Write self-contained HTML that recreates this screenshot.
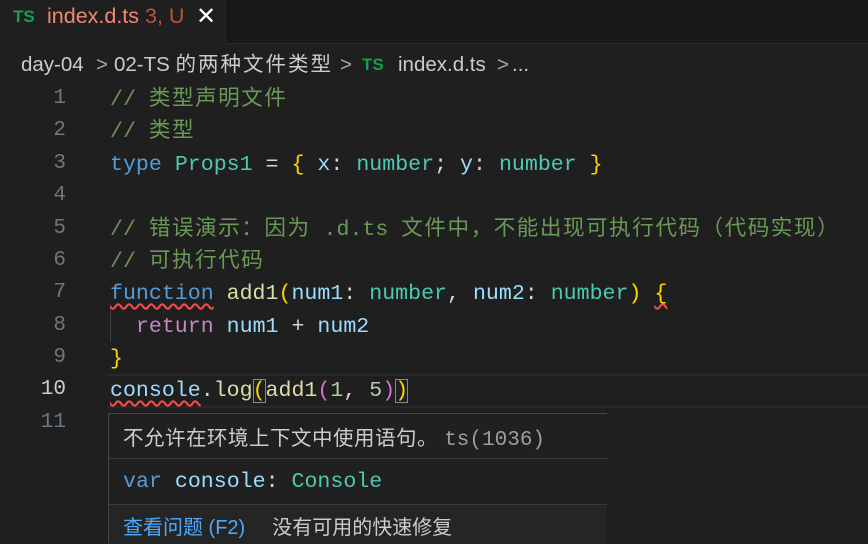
<!DOCTYPE html>
<html><head><meta charset="utf-8"><style>
body{margin:0;width:868px;height:542px;background:#1f1f1f;overflow:hidden;position:relative;font-family:"Liberation Sans","Noto Sans CJK SC",sans-serif}
.tabs{position:absolute;left:0;top:0;width:868px;height:43px;background:#181818;border-bottom:1px solid #2b2b2b}
.tab{position:absolute;left:0;top:0;width:225px;height:44px;background:#1f1f1f;border-right:1px solid #2b2b2b}
.ts{color:#10a34a;font-weight:bold;font-size:17px}
.code{position:absolute;left:0;font-family:"Liberation Mono","Noto Sans CJK SC",monospace;font-size:21.6px;white-space:pre;line-height:32.4px;height:32.4px}
.ln{position:absolute;width:66px;text-align:right;font-family:"Liberation Mono",monospace;font-size:21px;color:#6e7681;line-height:32.4px}
.c{color:#6a9955}.k{color:#569cd6}.t{color:#4ec9b0}.v{color:#9cdcfe}.f{color:#dcdcaa}.r{color:#c586c0}.y{color:#ffd700}.p{color:#da70d6}.b{color:#179fff}.w{color:#d4d4d4}.n{color:#b5cea8}
.sq{text-decoration:underline wavy #f14c4c;text-decoration-skip-ink:none;text-underline-offset:4px}
.hover{position:absolute;left:108px;top:413px;width:498px;height:129px;background:#202020;border:1px solid #454545;border-right:none;border-bottom:none}
.cj{letter-spacing:1.5px}
.bc{position:absolute;top:52px;font-size:20.5px;line-height:26px;color:#cccccc;white-space:nowrap}
</style></head><body>
<div class="tabs"><div class="tab">
<span class="ts" style="position:absolute;left:13px;top:7px">TS</span>
<span style="position:absolute;left:47px;top:4px;font-size:21.5px;color:#f48771">index.d.ts <span style="color:#c74e39">3, U</span></span>
<span style="position:absolute;left:196px;top:2px;font-size:24px;color:#fff">✕</span>
</div></div>
<span class="bc" style="left:21px">day-04</span>
<span class="bc" style="left:96px;color:#aaa">&gt;</span>
<span class="bc" style="left:114px">02-TS <span style="letter-spacing:2px">的两种文件类型</span></span>
<span class="bc" style="left:340px;color:#aaa">&gt;</span>
<span style="position:absolute;left:362px;top:55px;color:#10a34a;font-weight:bold;font-size:17px;line-height:20px">TS</span>
<span class="bc" style="left:398px">index.d.ts</span>
<span class="bc" style="left:497px;color:#aaa">&gt;</span>
<span class="bc" style="left:512px">...</span>
<div style="position:absolute;left:108px;top:374px;width:760px;height:30px;border-top:2px solid #282828;border-bottom:2px solid #282828"></div>
<div class="ln" style="top:83px">1</div><div class="ln" style="top:115px">2</div><div class="ln" style="top:148px">3</div><div class="ln" style="top:180px">4</div><div class="ln" style="top:213px">5</div><div class="ln" style="top:245px">6</div><div class="ln" style="top:277px">7</div><div class="ln" style="top:310px">8</div><div class="ln" style="top:342px">9</div><div class="ln" style="top:374px;color:#ccc">10</div><div class="ln" style="top:407px">11</div>
<div style="position:absolute;left:110px;top:310px;width:1px;height:32px;background:#404040"></div>
<div class="code" style="left:110px;top:84px"><span class="c">// <span class="cj">类型声明文件</span></span></div>
<div class="code" style="left:110px;top:116px"><span class="c">// <span class="cj">类型</span></span></div>
<div class="code" style="left:110px;top:149px"><span class="k">type</span> <span class="t">Props1</span> <span class="w">=</span> <span class="y">{</span> <span class="v">x</span><span class="w">:</span> <span class="t">number</span><span class="w">;</span> <span class="v">y</span><span class="w">:</span> <span class="t">number</span> <span class="y">}</span></div>
<div class="code" style="left:110px;top:214px"><span class="c">// <span class="cj">错误演示：因为</span> .d.ts <span class="cj">文件中，不能出现可执行代码（代码实现）</span></span></div>
<div class="code" style="left:110px;top:246px"><span class="c">// <span class="cj">可执行代码</span></span></div>
<div class="code" style="left:110px;top:278px"><span class="k sq">function</span> <span class="f">add1</span><span class="y">(</span><span class="v">num1</span><span class="w">:</span> <span class="t">number</span><span class="w">,</span> <span class="v">num2</span><span class="w">:</span> <span class="t">number</span><span class="y">)</span> <span class="y sq">{</span></div>
<div class="code" style="left:110px;top:311px">  <span class="r">return</span> <span class="v">num1</span> <span class="w">+</span> <span class="v">num2</span></div>
<div class="code" style="left:110px;top:343px"><span class="y">}</span></div>
<div class="code" style="left:110px;top:375px"><span class="v sq">console</span><span class="w">.</span><span class="f">log</span><span class="y" style="outline:1px solid #888;outline-offset:-1px">(</span><span class="f">add1</span><span class="p">(</span><span class="n">1</span><span class="w">,</span> <span class="n">5</span><span class="p">)</span><span class="y" style="outline:1px solid #888;outline-offset:-1px">)</span></div>
<div class="hover">
<div style="position:absolute;left:14px;top:7px;font-size:20.5px;color:#cccccc;white-space:nowrap;letter-spacing:0.5px">不允许在环境上下文中使用语句。 <span style="font-family:'Liberation Mono',monospace;color:#9d9d9d;font-size:21px;letter-spacing:0">ts(1036)</span></div>
<div style="position:absolute;left:0;top:44px;width:498px;height:1px;background:#3a3a3a"></div>
<div class="code" style="left:14px;top:52px"><span class="k">var</span> <span class="v">console</span><span class="w">:</span> <span class="t">Console</span></div>
<div style="position:absolute;left:0;top:90px;width:498px;height:39px;background:#252526;border-top:1px solid #3a3a3a"></div>
<div style="position:absolute;left:14px;top:97px;font-size:20px;color:#4daafc;white-space:nowrap">查看问题 (F2)<span style="color:#cccccc;margin-left:27px">没有可用的快速修复</span></div>
</div>
</body></html>
